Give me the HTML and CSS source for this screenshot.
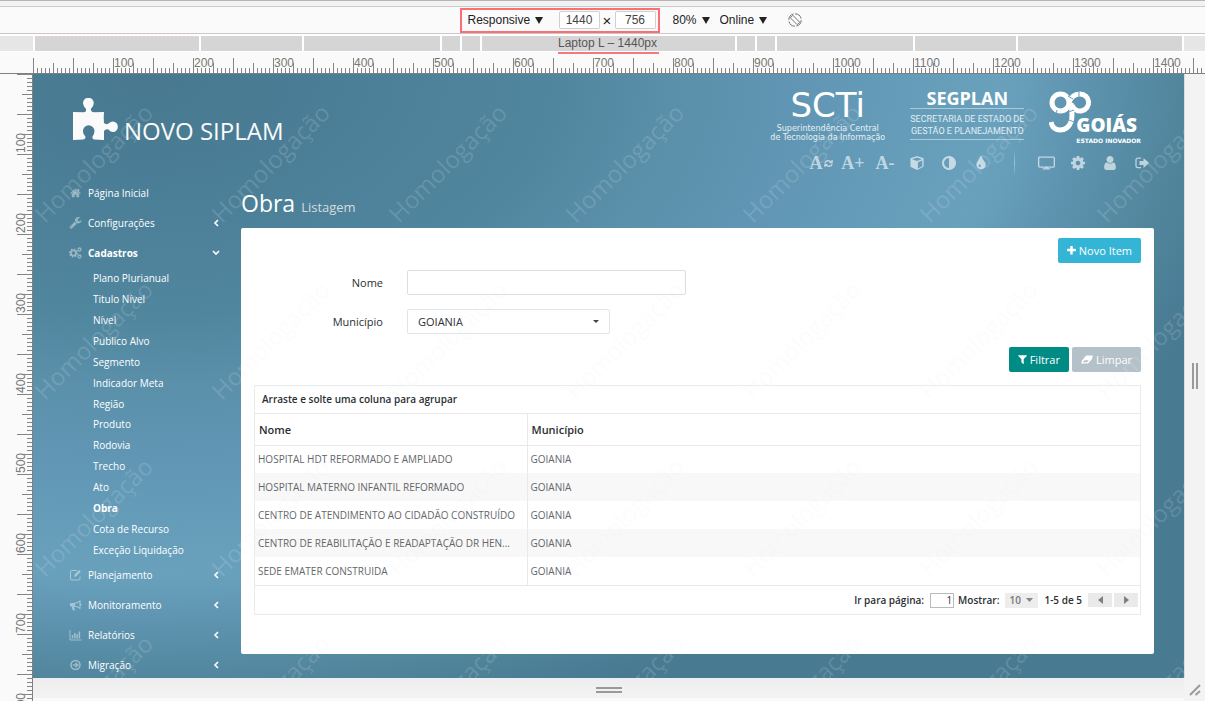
FILE: index.html
```html
<!DOCTYPE html>
<html lang="pt-BR">
<head>
<meta charset="utf-8">
<title>Novo Siplam - Obra</title>
<link rel="stylesheet" href="styles.css">
</head>
<body>
<svg class="defs" aria-hidden="true">
  <symbol id="chev-left" viewBox="0 0 6 8"><path d="M5 1 2 4l3 3" fill="none" stroke="currentColor" stroke-width="1.6"/></symbol>
  <symbol id="tri" viewBox="0 0 9 9"><path d="M0 1h9L4.500 9z" fill="currentColor"/></symbol>
</svg>

<header class="device-bar">
  <div class="size-box">
    <label class="pick"><select aria-label="Dispositivo"><option>Responsive</option></select><svg><use href="#tri"/></svg></label>
    <div class="dims">
      <input type="text" value="1440" aria-label="Largura"><span class="times">×</span><input type="text" value="756" aria-label="Altura">
    </div>
  </div>
  <label class="pick zoom-pick"><select aria-label="Zoom"><option>80%</option></select><svg><use href="#tri"/></svg></label>
  <label class="pick"><select aria-label="Rede"><option>Online</option></select><svg><use href="#tri"/></svg></label>
  <button class="rotate" aria-label="Girar"><svg viewBox="0 0 14 14" fill="none" stroke="#777"><circle cx="7" cy="7" r="6.200" stroke-dasharray="8 1.500"/><path d="M4.800 2.300 11.700 9.200 9.200 11.700 2.300 4.800z"/></svg></button>
</header>

<div class="media-bar">
  <i class="out-left"></i><i class="s164 dotted"></i><i class="s100"></i><i class="s136"></i><i class="s18"></i><i class="s18"></i>
  <div class="s252"><span>Laptop L – 1440px</span></div>
  <i class="s18"></i><i class="s18"></i><i class="s136"></i><i class="s100"></i><i class="s164"></i><i class="out-right"></i>
</div>

<div class="h-ruler"><div class="h-ticks" id="h-labels"></div></div>

<div class="stage">
  <div class="v-ruler" id="v-labels"></div>
  <div class="app">
    <header class="top">
      <a class="brand" href="#">
        <svg viewBox="0 0 45 43"><path fill="#fafafa" d="M0 14 11 14.300Q13.500 14 13 11 10 8 10 5a5.400 5.300 0 0 1 10.800 0q0 3-3 6 0 3 3 3.300L31 14Q30.500 20 31 25q2 2 4.500.5 2-2 4.500-2a4.800 5.200 0 0 1 0 10.500q-2.500 0-4.500-2.500-3-1-4.500 1.500V42L21 41.500q-2-.5-1.500-3 2-3 2-5.500a5.800 5.800 0 0 0-11.600 0q0 3 2.500 5.500.5 2.500-2 3L0 42z"/></svg>
        <span>NOVO SIPLAM</span>
      </a>
      <div class="top-right">
        <div class="logos">
          <div class="scti"><b>SCTi</b><span>Superintendência Central</span><span>de Tecnologia da Informação</span></div>
          <div class="segplan"><b>SEGPLAN</b><p>SECRETARIA DE ESTADO DE<br>GESTÃO E PLANEJAMENTO</p></div>
          <div class="goias">
            <svg viewBox="0 0 44 44" fill="none" stroke="#fff" stroke-width="5"><circle cx="11.500" cy="11.500" r="8.500"/><path d="M20 12C22 5 26 3 31 3a8.500 8.500 0 1 1-8 11"/><path d="M22 12c1 10 2 13 0 19-2 5-6 8-11 8-5 0-8-3-9-8"/><path d="m19 5 5 3M19 21l6-2M8 19l-1 4M30 0v6M20 29l5 2" stroke="#6aa0bb" stroke-width="1"/></svg>
            <div><b>GOIÁS</b><small>ESTADO INOVADOR</small></div>
          </div>
        </div>
        <nav class="tools">
          <button aria-label="Fonte padrão"><span>A</span><svg class="refresh" viewBox="0 0 10 10" fill="none" stroke="currentColor" stroke-width="1.500"><path d="M1 4.500C2 1.500 6 1 8 3.500M9 1v3H6M9 5.500C8 8.500 4 9 2 6.500M1 9V6h3"/></svg></button>
          <button aria-label="Aumentar fonte"><span>A+</span></button>
          <button aria-label="Diminuir fonte"><span>A-</span></button>
          <button aria-label="Cubo"><svg viewBox="0 0 16 16"><path fill="currentColor" fill-rule="evenodd" d="m8 0 7.500 2.700v9.600L8 16 .5 12.300V2.700zm0 1.700L2.500 3.700 8 5.700l5.500-2zm1 5.300v7.200l5-2.500V5.200z"/></svg></button>
          <button aria-label="Contraste"><svg viewBox="128 128 1536 1536"><path fill="currentColor" d="M896 1440v-1088q-148 0-273 73t-198 198-73 273 73 273 198 198 273 73zm768-544q0 209-103 385.500t-279.500 279.500-385.500 103-385.500-103-279.500-279.500-103-385.500 103-385.500 279.500-279.500 385.500-103 385.500 103 279.500 279.500 103 385.500z"/></svg></button>
          <button aria-label="Cores"><svg viewBox="128 64 1536 1536"><path fill="currentColor" d="M896 1152q0-36-20-69-1-1-15.500-22.500t-25.500-38-25-44-21-50.500q-4-16-21-16t-21 16q-7 23-21 50.500t-25 44-25.500 38-15.500 22.500q-20 33-20 69 0 53 37.500 90.500t90.500 37.500 90.500-37.500 37.500-90.500zm512-128q0 212-150 362t-362 150-362-150-150-362q0-145 81-275 6-9 62.500-90.500t101-151 99.500-178 83-201.500q9-30 34-47t51-17 51.500 17 33.500 47q28 93 83 201.500t99.500 178 101 151 62.500 90.500q81 127 81 275z"/></svg></button>
          <i class="split"></i>
          <button aria-label="Tela"><svg class="wide" viewBox="0 0 18 14" fill="none" stroke="currentColor" stroke-width="1.400"><rect x=".7" y=".7" width="16.600" height="10.600" rx="1"/><path d="M5 13.300h8M9 11v2"/></svg></button>
          <button aria-label="Ajustes"><svg viewBox="128 128 1536 1536"><path fill="currentColor" d="M1152 896q0-106-75-181t-181-75-181 75-75 181 75 181 181 75 181-75 75-181zm512-109v222q0 12-8 23t-20 13l-185 28q-19 54-39 91 35 50 107 138 10 12 10 25t-9 23q-27 37-99 108t-94 71q-12 0-26-9l-138-108q-44 23-91 38-16 136-29 186-7 28-36 28h-222q-14 0-24.500-8.500t-11.500-21.500l-28-184q-49-16-90-37l-141 107q-10 9-25 9-14 0-25-11-126-114-165-168-7-10-7-23 0-12 8-23 15-21 51-66.500t54-70.500q-27-50-41-99l-183-27q-13-2-21-12.500t-8-23.500v-222q0-12 8-23t19-13l186-28q14-46 39-92-40-57-107-138-10-12-10-24 0-10 9-23 26-36 98.500-107.500t94.500-71.500q13 0 26 10l138 107q44-23 91-38 16-136 29-186 7-28 36-28h222q14 0 24.500 8.500t11.500 21.500l28 184q49 16 90 37l142-107q9-9 24-9 13 0 25 10 129 119 165 170 7 8 7 22 0 12-8 23-15 21-51 66.500t-54 70.500q26 50 41 98l183 28q13 2 21 12.500t8 23.500z"/></svg></button>
          <button aria-label="Usuário"><svg viewBox="128 128 1536 1536"><path fill="currentColor" d="M1536 1399q0 109-62.500 187t-150.500 78h-854q-88 0-150.500-78t-62.500-187q0-85 8.500-160.500t31.500-152 58.500-131 94-89 134.500-34.500q131 128 313 128t313-128q76 0 134.500 34.500t94 89 58.500 131 31.500 152 8.500 160.500zm-256-887q0 159-112.500 271.500t-271.500 112.500-271.500-112.500-112.500-271.500 112.500-271.500 271.500-112.500 271.500 112.500 112.500 271.500z"/></svg></button>
          <button aria-label="Sair"><svg viewBox="0 0 14 14"><path d="M6 2.200H2.700c-1 0-1.700.7-1.700 1.700v6c0 1 .7 1.700 1.700 1.700H6" fill="none" stroke="currentColor" stroke-width="1.300"/><path fill="currentColor" d="M4.500 5h4V2l5.500 5-5.500 5V9h-4z"/></svg></button>
        </nav>
      </div>
    </header>

    <div class="columns">
      <nav class="side">
        <a href="#"><svg viewBox="64 128 1664 1536"><path fill="currentColor" d="M1472 992v480q0 26-19 45t-45 19h-384v-384h-256v384h-384q-26 0-45-19t-19-45v-480q0-1 .5-3t.5-3l575-474 575 474q1 2 1 6zm223-69l-62 74q-8 9-21 11h-3q-13 0-21-7l-692-577-692 577q-12 8-24 7-13-2-21-11l-62-74q-8-10-7-23.500t11-21.500l719-599q32-26 76-26t76 26l244 204v-195q0-14 9-23t23-9h192q14 0 23 9t9 23v408l219 182q10 8 11 21.500t-7 23.500z"/></svg><span>Página Inicial</span></a>
        <a href="#"><svg viewBox="64 128 1664 1664"><path fill="currentColor" d="M448 1472q0-26-19-45t-45-19-45 19-19 45 19 45 45 19 45-19 19-45zm644-420l-682 682q-37 37-90 37-52 0-91-37l-106-108q-38-36-38-90 0-53 38-91l681-681q39 98 114.500 173.500t173.500 114.500zm634-435q0 39-23 106-47 134-164.500 217.500t-258.500 83.500q-185 0-316.500-131.500t-131.500-316.500 131.500-316.500 316.500-131.500q58 0 121.500 16.500t107.500 46.500q16 11 16 28t-16 28l-293 169v224l193 107q5-3 79-48.500t135.500-81 70.500-35.500q15 0 23.500 10t8.500 25z"/></svg><span>Configurações</span><svg class="chev"><use href="#chev-left"/></svg></a>
        <a href="#" class="active"><svg viewBox="0 0 13 12" fill="none" stroke="currentColor"><circle cx="4.500" cy="6" r="2.600" stroke-width="1.800"/><circle cx="4.500" cy="6" r="4" stroke-width="1.200" stroke-dasharray="1.600 1.540"/><circle cx="10.500" cy="2.500" r="1.500" stroke-width="1.300"/><circle cx="10.500" cy="9.500" r="1.500" stroke-width="1.300"/></svg><span>Cadastros</span><svg class="chev" viewBox="0 0 8 6"><path d="m1 1 3 3 3-3" fill="none" stroke="currentColor" stroke-width="1.600"/></svg></a>
        <div class="sub">
          <a href="#">Plano Plurianual</a><a href="#">Titulo Nível</a><a href="#">Nível</a><a href="#">Publico Alvo</a><a href="#">Segmento</a><a href="#">Indicador Meta</a><a href="#">Região</a><a href="#">Produto</a><a href="#">Rodovia</a><a href="#">Trecho</a><a href="#">Ato</a><a href="#" class="active">Obra</a><a href="#">Cota de Recurso</a><a href="#">Exceção Liquidação</a>
        </div>
        <a href="#"><svg viewBox="0 0 12 12" fill="none" stroke="currentColor"><path d="M7.500 1.500h-5a1.500 1.500 0 0 0-1.500 1.500v6.500A1.500 1.500 0 0 0 2.500 11h6.500a1.500 1.500 0 0 0 1.500-1.500V7.500"/><path d="m4.500 8 .5-2.300L9.700 1l1.600 1.600-4.600 4.700z" fill="currentColor" stroke="none"/></svg><span>Planejamento</span><svg class="chev"><use href="#chev-left"/></svg></a>
        <a href="#"><svg viewBox="0 0 12 12"><path fill="currentColor" fill-rule="evenodd" d="M11 1v3.600q1 .2 1 1.100t-1 1.100v3.600Q8 8 5 7.700q-.8.900 0 1.700-.4.900.8 1.600-1.400.8-2.800 0L2.300 7.600H1.200Q.4 7.600.4 6.800V4.700q0-.8.800-.8h3Q8 3.700 11 1zM10 3Q8 4.500 5.500 4.800v1.900Q8 7 10 8.500z"/></svg><span>Monitoramento</span><svg class="chev"><use href="#chev-left"/></svg></a>
        <a href="#"><svg viewBox="0 0 12 12" fill="none" stroke="currentColor"><path d="M.5 1v10h11.500"/><path d="M3 9.500V6M5.300 9.500V4M7.600 9.500V5M9.900 9.500V2.500" stroke-width="1.500"/></svg><span>Relatórios</span><svg class="chev"><use href="#chev-left"/></svg></a>
        <a href="#"><svg viewBox="0 0 12 12" fill="none" stroke="currentColor" stroke-width="1.600"><circle cx="6" cy="6" r="4.500"/><path d="M3.300 6h4.500M6 3.700 8.300 6 6 8.300" stroke-width="1.500"/></svg><span>Migração</span><svg class="chev"><use href="#chev-left"/></svg></a>
      </nav>

      <main class="content">
        <h1>Obra <small>Listagem</small></h1>
        <section class="panel">
          <div class="actions"><button class="btn info"><svg viewBox="192 192 1408 1408"><path fill="currentColor" d="M1600 736v192q0 40-28 68t-68 28h-416v416q0 40-28 68t-68 28h-192q-40 0-68-28t-28-68v-416h-416q-40 0-68-28t-28-68v-192q0-40 28-68t68-28h416v-416q0-40 28-68t68-28h192q40 0 68 28t28 68v416h416q40 0 68 28t28 68z"/></svg>Novo Item</button></div>
          <form class="filters">
            <label for="nome">Nome</label>
            <input id="nome" type="text">
            <label for="mun">Município</label>
            <div class="combo"><select id="mun"><option>GOIANIA</option></select><svg viewBox="0 0 6 3"><path d="M0 0h6L3 3z" fill="#444"/></svg></div>
          </form>
          <div class="actions filter-actions">
            <button class="btn teal"><svg viewBox="160 200 1460 1460"><path fill="currentColor" d="M1595 295q17 41-14 70l-493 493v742q0 42-39 59-13 5-25 5-27 0-45-19l-256-256q-19-19-19-45v-486l-493-493q-31-29-14-70 17-39 59-39h1280q42 0 59 39z"/></svg>Filtrar</button>
            <button class="btn gray"><svg class="eraser" viewBox="0 0 12 9"><path fill="currentColor" fill-rule="evenodd" d="M5.500.5h5.700q.8 0 .5.800L11 4 7.500 8q-.4.500-1 .5H.8q-.9 0-.5-.8L1 5.500 4.700 1q.3-.5.800-.5zM1.800 7.300h4.300l1.700-2H3.500z"/></svg>Limpar</button>
          </div>
          <div class="grid">
            <div class="group-hint">Arraste e solte uma coluna para agrupar</div>
            <table>
              <thead><tr><th>Nome</th><th>Município</th></tr></thead>
              <tbody>
                <tr><td>HOSPITAL HDT REFORMADO E AMPLIADO</td><td>GOIANIA</td></tr>
                <tr><td>HOSPITAL MATERNO INFANTIL REFORMADO</td><td>GOIANIA</td></tr>
                <tr><td>CENTRO DE ATENDIMENTO AO CIDADÃO CONSTRUÍDO</td><td>GOIANIA</td></tr>
                <tr><td>CENTRO DE REABILITAÇÃO E READAPTAÇÃO DR HEN...</td><td>GOIANIA</td></tr>
                <tr><td>SEDE EMATER CONSTRUIDA</td><td>GOIANIA</td></tr>
              </tbody>
            </table>
            <div class="pager">
              <label for="pg">Ir para página:</label><input id="pg" type="text" value="1">
              <label for="show">Mostrar:</label>
              <div class="show"><select id="show"><option>10</option></select><svg viewBox="0 0 7 4"><path d="M0 0h7L3.500 4z" fill="#888"/></svg></div>
              <span>1-5 de 5</span>
              <button aria-label="Anterior"><svg viewBox="0 0 5 8"><path d="M5 0v8L0 4z" fill="#808080"/></svg></button><button aria-label="Próxima"><svg viewBox="0 0 5 8"><path d="M0 0v8l5-4z" fill="#808080"/></svg></button>
            </div>
          </div>
        </section>
      </main>
    </div>
    <div class="watermark" id="watermark" aria-hidden="true"></div>
  </div>
  <div class="handle-right"><svg viewBox="0 0 6 26"><path d="M1 0v26M5 0v26" stroke="#9a9a9a" stroke-width="2"/></svg></div>
  <div class="handle-bottom"><svg viewBox="0 0 26 6"><path d="M0 1h26M0 5h26" stroke="#9a9a9a" stroke-width="2"/></svg></div>
  <div class="handle-corner"><svg viewBox="0 0 12 12"><path d="M1 11 11 1M6.500 11 11 7" stroke="#9a9a9a" stroke-width="2"/></svg></div>
</div>
<script src="app.js"></script>
</body>
</html>
```
FILE: styles.css
```css
* { box-sizing: border-box; }
body {
  margin: 0;
  height: 100vh;
  overflow: hidden;
  display: flex;
  flex-direction: column;
  background: #fafafa;
  font-family: "Open Sans", "Noto Sans", sans-serif;
  font-size: 11px;
  color: #2b2f33;
}
a { color: inherit; text-decoration: none; }
button, input, select { font: inherit; color: inherit; margin: 0; }
button { border: 0; padding: 0; background: none; }
select { appearance: none; border: 0; background: none; padding: 0; }
.defs { position: absolute; width: 0; height: 0; }

/* browser device bar */
.device-bar {
  flex: none;
  height: 34px;
  padding-top: 7px;
  display: flex;
  align-items: center;
  justify-content: center;
  background: linear-gradient(#b5b5b5 1px, #f2f2f2 1px 6px, #ccc 6px 7px, #fafafa 7px);
  border-bottom: 1px solid #c8c8c8;
  font: 12px "Liberation Sans", Arial, sans-serif;
  color: #222;
  padding-left: 56px;
}
.size-box {
  display: flex;
  align-items: center;
  justify-content: space-between;
  width: 200px;
  height: 25px;
  padding: 0 2px 0 6px;
  border: 2px solid #fb6f72;
  margin-right: 13px;
}
.pick { display: flex; align-items: center; gap: 4px; margin-right: 10px; }
.size-box .pick { margin-right: 0; }
.pick svg { width: 8px; height: 8px; }
.dims { display: flex; align-items: center; }
.dims input {
  width: 41px;
  height: 18px;
  border: 1px solid #d0d0d0;
  border-radius: 2px;
  background: #fff;
  text-align: center;
  padding: 0;
  color: #444;
}
.times { width: 15px; text-align: center; font-size: 15px; }
.rotate { margin-left: 11px; width: 14px; height: 14px; }
.rotate svg { display: block; }

.media-bar {
  flex: none;
  display: flex;
  gap: 2px;
  height: 18px;
  padding: 2px 0 1px;
  background: #fff;
}
.media-bar > * { background: #d5d5d5; }
.media-bar .out-left { flex: 0 0 33px; background: #e6e6e6; }
.media-bar .out-right { flex: 0 0 21px; background: #e6e6e6; }
.s164 { flex: 164; } .s100 { flex: 100; } .s136 { flex: 136; } .s18 { flex: 18; }
.dotted { background: repeating-linear-gradient(90deg, #f2c4c0 0 2px, #ddd 2px 4px) top / 100% 1px no-repeat #d5d5d5 !important; }
.s252 {
  flex: 252;
  display: flex;
  justify-content: center;
  font: 12px/15px "Liberation Sans", Arial, sans-serif;
  color: #555;
}
.s252 span { height: 18px; border-bottom: 2px solid #f8787c; padding-right: 2px; }

/* rulers */
.h-ruler { flex: none; height: 22px; padding-left: 33px; border-bottom: 1px solid #808080; overflow: hidden; }
.h-ticks {
  height: 21px;
  padding: 4px 0 0 80px;
  display: flex;
  background:
    repeating-linear-gradient(90deg, #858585 0 1px, transparent 1px 4px) bottom left / 100% 5px no-repeat,
    repeating-linear-gradient(90deg, #858585 0 1px, transparent 1px 20px) bottom left / 100% 10px no-repeat,
    repeating-linear-gradient(90deg, #858585 0 1px, transparent 1px 40px) bottom left / 100% 15px no-repeat;
  font: 12px/14px "Liberation Sans", Arial, sans-serif;
  color: #777;
}
.h-ticks span { flex: 0 0 80px; padding-left: 1px; }
.stage {
  flex: 1;
  min-height: 0;
  display: grid;
  grid-template: minmax(0, 1fr) 23px / 33px minmax(0, 1fr) 21px;
}
.v-ruler {
  grid-row: 1 / 3;
  overflow: hidden;
  border-right: 1px solid #808080;
  display: flex;
  flex-direction: column;
  background:
    repeating-linear-gradient(#858585 0 1px, transparent 1px 4px) right top / 5px 100% no-repeat,
    repeating-linear-gradient(#858585 0 1px, transparent 1px 20px) right top / 10px 100% no-repeat,
    repeating-linear-gradient(#858585 0 1px, transparent 1px 40px) right top / 15px 100% no-repeat;
  font: 12px/14px "Liberation Sans", Arial, sans-serif;
  color: #777;
}
.v-ruler span {
  flex: 0 0 80px;
  padding-top: 1px;
  margin-left: 14px;
  writing-mode: vertical-rl;
  transform: rotate(180deg);
  width: 14px;
}
.handle-right, .handle-bottom, .handle-corner {
  background: #f3f3f3;
  display: flex;
  align-items: center;
  justify-content: center;
}
.handle-right { border-left: 1px solid #ddd; }
.handle-right svg { width: 6px; height: 26px; }
.handle-bottom { background: linear-gradient(#eee, #f3f3f3 20px, #fafafa 20px); }
.handle-bottom svg { width: 26px; height: 6px; }
.handle-corner svg { width: 12px; height: 12px; }

/* application */
.app {
  position: relative;
  overflow: hidden;
  padding: 0 26px 0 32px;
  color: #fff;
  background: radial-gradient(ellipse 100% 112% at 10% 0%, #47788f 0%, #4b7f97 18%, #50869e 36%, #5b90aa 46%, #6096b3 56%, #69a1bd 74%, #5f94b0 81%, #50859c 90%, #487a92 98%);
}
.top { display: flex; justify-content: space-between; height: 104px; }
.brand { display: flex; align-items: flex-start; gap: 6px; padding: 24px 0 0 8px; font-size: 24px; line-height: 34px; color: #fafafa; }
.brand svg { width: 45px; height: 43px; }
.brand span { padding-top: 16px; }
.top-right { display: flex; flex-direction: column; align-items: flex-end; }
.logos { display: flex; align-items: flex-start; gap: 25px; padding: 12px 17px 0 0; height: 76px; }
.scti { display: flex; flex-direction: column; align-items: center; font: 8px/9px "DejaVu Sans", sans-serif; color: #e8f0f4; }
.scti b { font-size: 34px; line-height: 38px; font-weight: 400; color: #fff; }
.segplan { display: flex; flex-direction: column; align-items: center; padding-top: 2px; }
.segplan b { font-size: 18px; line-height: 20px; }
.segplan p { margin: 0; padding: 4px 0 2px; border: solid rgba(255, 255, 255, .45); border-width: 1px 0; font: 9px/12px Roboto, sans-serif; text-align: center; color: #e2edf2; }
.goias { display: flex; align-items: flex-start; }
.goias svg { width: 44px; height: 44px; margin-right: -17px; margin-top: 5px; }
.goias div { display: flex; flex-direction: column; padding-top: 26px; }
.goias b { font-size: 19px; line-height: 26px; font-weight: 800; }
.goias small { font: bold 6px/6px "DejaVu Sans", sans-serif; }
.tools { display: flex; align-items: center; height: 26px; color: rgba(255, 255, 255, .62); }
.tools button { width: 32px; height: 26px; display: flex; align-items: center; justify-content: center; font: bold 18px/26px "Liberation Serif", serif; }
.tools svg { width: 14px; height: 14px; }
.tools .wide { width: 17px; }
.tools .refresh { width: 9px; height: 9px; margin-left: 1px; }
.split { width: 1px; height: 26px; margin: 0 15px 0 17px; background: linear-gradient(transparent, rgba(255, 255, 255, .4), transparent); }

.columns { display: flex; align-items: flex-start; padding-right: 4px; }
.side { flex: 0 0 155px; margin-right: 21px; display: flex; flex-direction: column; font-size: 10px; }
.side > a { display: flex; align-items: center; height: 30px; padding-left: 4px; gap: 6px; }
.side > a > svg { width: 13px; height: 12px; color: rgba(255, 255, 255, .42); }
.side > a:first-child > svg { height: 10px; }
.side .chev { width: 8px !important; height: 8px !important; margin-left: auto; color: #fff !important; }
.side .active { font-weight: 700; }
.sub { display: grid; grid-auto-rows: 1fr; height: 292px; padding-left: 28px; align-items: center; }
.content { flex: 1; min-width: 0; }
h1 { margin: 0; font-size: 23px; line-height: 34px; font-weight: 400; padding-top: 8px; }
h1 small { font-size: 13px; color: #d5dcdf; }
.panel { margin-top: 4px; min-height: 426px; padding: 10px 13px; background: #fff; border-radius: 2px; color: #2b2f33; }
.actions { display: flex; justify-content: flex-end; gap: 3px; }
.btn { height: 25px; padding: 0 9px; border-radius: 2px; color: #fff; display: flex; align-items: center; gap: 3px; }
.btn svg { width: 9px; height: 9px; }
.btn .eraser { width: 12px; }
.info { background: #35b5d6; }
.teal { background: #008b85; }
.gray { background: #b4c1c8; }
.filters { display: grid; grid-template-columns: 129px minmax(0, 1fr); gap: 14px 24px; align-items: center; padding: 7px 0 13px; }
.filters label { text-align: right; }
.filters input { width: 279px; height: 25px; border: 1px solid #ddd; border-radius: 2px; background: #fff; }
.combo { width: 203px; height: 25px; border: 1px solid #dfe5e9; border-radius: 2px; display: flex; align-items: center; padding: 0 10px; }
.combo select { flex: 1; }
.combo svg { width: 6px; height: 3px; }
.grid { margin-top: 13px; border: 1px solid #e8ecef; font-size: 10px; }
.group-hint { height: 28px; padding-left: 7px; line-height: 27px; font-weight: 600; border-bottom: 1px solid #e8e8ea; }
table { width: 100%; border-collapse: collapse; table-layout: fixed; }
th { height: 31px; padding: 0 4px; text-align: left; font-size: 11px; font-weight: 600; border-bottom: 1px solid #e8e8ea; }
td { height: 28px; padding: 0 3px; color: #63676a; white-space: nowrap; }
th:first-child, td:first-child { width: 272px; border-right: 1px solid #e8ebee; }
tbody tr:nth-child(even) { background: #f8f8f8; }
.pager { display: flex; align-items: center; justify-content: flex-end; height: 29px; padding-right: 2px; border-top: 1px solid #e4e9ec; font-weight: 600; }
.pager input { width: 24px; height: 15px; border: 1px solid #bbb; border-radius: 0; background: #fff; padding: 0 1px; text-align: right; margin: 0 4px 0 6px; font-weight: 400; }
.show { width: 33px; height: 15px; display: flex; align-items: center; gap: 5px; padding: 0 4px; margin: 0 6px; background: #ededed; color: #777; }
.show svg { width: 7px; height: 4px; flex: none; }
.pager button { width: 24px; height: 14px; background: #eaeaea; display: flex; align-items: center; justify-content: center; margin-left: 2px; }
.pager span { margin-right: 4px; }
.pager button svg { width: 5px; height: 8px; }

.watermark {
  position: absolute;
  inset: 0 0 0 -28px;
  display: grid;
  grid-template-columns: repeat(12, 177px);
  grid-auto-rows: 177px;
  place-items: center;
  overflow: hidden;
  pointer-events: none;
  font-size: 24px;
  line-height: 32px;
  color: rgba(238, 240, 243, .16);
}
.watermark span { transform: rotate(-45deg); }
```
FILE: app.js
```js
const fill = (id, texts) => {
  const host = document.getElementById(id);
  texts.forEach(t => {
    const s = document.createElement('span');
    s.textContent = t;
    host.append(s);
  });
};
const steps = n => Array.from({ length: n }, (_, i) => (i + 1) * 100);
fill('h-labels', steps(14));
fill('v-labels', steps(8));
fill('watermark', Array(48).fill('Homologação'));
```
